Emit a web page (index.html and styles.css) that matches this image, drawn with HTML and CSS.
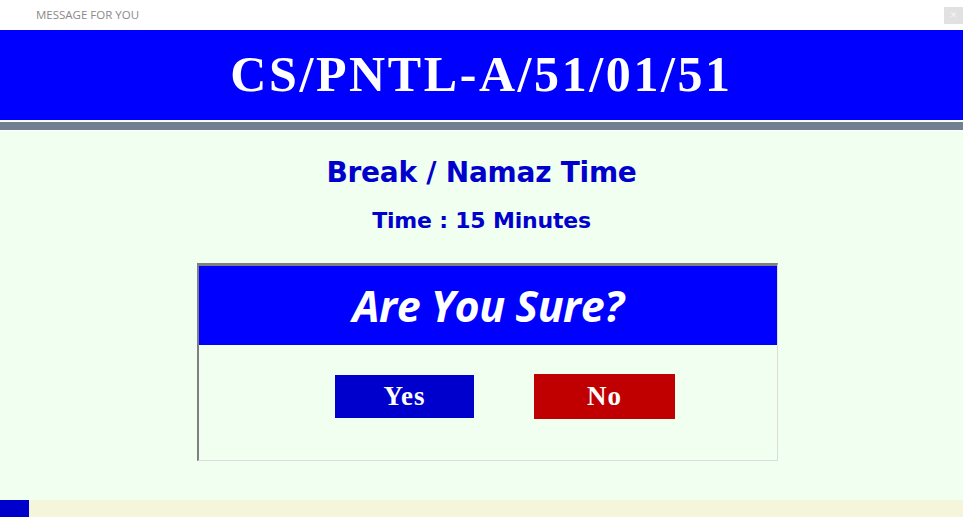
FILE: index.html
```html
<!DOCTYPE html>
<html>
<head>
<meta charset="utf-8">
<link rel="stylesheet" href="styles.css">
</head>
<body>
<div class="window">
  <div class="titlebar">
    <span class="title">MESSAGE FOR YOU</span>
    <span class="close">&#x2715;</span>
  </div>
  <div class="header">CS/PNTL-A/51/01/51</div>
  <div class="divider"></div>
  <div class="content">
    <h1 class="heading">Break / Namaz Time</h1>
    <h2 class="sub">Time : 15 Minutes</h2>
    <div class="dialog">
      <div class="dialog-head">Are You Sure?</div>
      <div class="dialog-body">
        <button class="btn yes">Yes</button>
        <button class="btn no">No</button>
      </div>
    </div>
  </div>
  <div class="statusbar">
    <div class="status-block"></div>
  </div>
</div>
</body>
</html>
```

FILE: styles.css
```css
html, body {
  margin: 0;
  padding: 0;
  width: 963px;
  height: 517px;
  overflow: hidden;
  background: #f0fff0;
}
.window {
  display: flex;
  flex-direction: column;
  height: 517px;
}
.titlebar {
  height: 30px;
  background: #ffffff;
  display: flex;
  align-items: flex-start;
  justify-content: space-between;
}
.title {
  font-family: "Open Sans", sans-serif;
  font-size: 11.5px;
  color: #8a8a8a;
  margin-left: 36px;
  margin-top: 7px;
  line-height: 16px;
}
.close {
  width: 19px;
  height: 17px;
  margin-top: 7px;
  background: #e1e1e1;
  color: #f4f4f4;
  font-size: 9px;
  line-height: 17px;
  text-align: center;
  font-family: "DejaVu Sans", sans-serif;
}
.header {
  height: 90px;
  background: #0000ff;
  color: #ffffff;
  font-family: "Liberation Serif", serif;
  font-weight: bold;
  font-size: 50px;
  letter-spacing: 2.6px;
  line-height: 88px;
  text-align: center;
}
.divider {
  height: 8px;
  border-top: 1px solid #ffffff;
  border-bottom: 1px solid #ffffff;
  background: #708090;
  margin-top: 1px;
}
.content {
  flex: 1;
  display: flex;
  flex-direction: column;
  align-items: center;
  background: #f0fff0;
}
.heading {
  margin: 23px 0 0 0;
  font-family: "DejaVu Sans", sans-serif;
  font-weight: bold;
  font-size: 28px;
  line-height: 38px;
  color: #0000cc;
  letter-spacing: -0.25px;
}
.sub {
  margin: 14px 0 0 0;
  font-family: "DejaVu Sans", sans-serif;
  font-weight: bold;
  font-size: 22px;
  line-height: 30px;
  color: #0000cc;
  letter-spacing: -0.2px;
}
.dialog {
  margin-top: 27px;
  margin-left: 12px;
  width: 578px;
  height: 194px;
  border-top: 3px solid #808080;
  border-left: 2px solid #808080;
  border-right: 1px solid #dcdcdc;
  border-bottom: 1px solid #dcdcdc;
  display: flex;
  flex-direction: column;
}
.dialog-head {
  height: 79px;
  background: #0000ff;
  color: #ffffff;
  font-family: "Open Sans", sans-serif;
  font-weight: bold;
  font-style: italic;
  font-size: 43px;
  line-height: 79px;
  text-align: center;
  letter-spacing: -0.5px;
}
.dialog-body {
  display: flex;
  align-items: flex-start;
  padding-top: 29px;
  padding-left: 136px;
  gap: 60px;
}
.btn {
  border: none;
  padding: 0;
  margin: 0;
  color: #ffffff;
  font-family: "Liberation Serif", serif;
  font-weight: bold;
  font-size: 27px;
  letter-spacing: 1px;
  text-align: center;
}
.yes {
  width: 139px;
  height: 43px;
  margin-top: 1px;
  background: #0000cc;
}
.no {
  width: 141px;
  height: 45px;
  background: #c00000;
}
.statusbar {
  height: 17px;
  background: #f5f5dc;
  display: flex;
}
.status-block {
  width: 29px;
  background: #0000cc;
}
```
